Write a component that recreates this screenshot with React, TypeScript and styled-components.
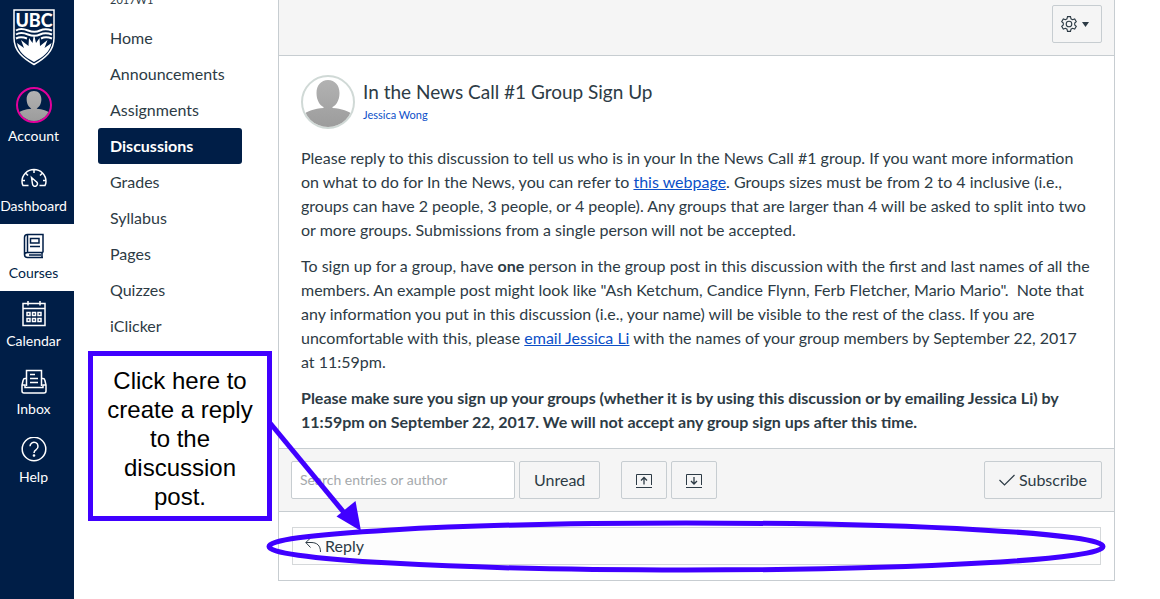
import React from "react";
import styled, { createGlobalStyle, css } from "styled-components";

const navy = "#001e47";
const ink = "#2d3b45";
const line = "#c7cdd1";
const marker = "#4000ff";

const GlobalStyle = createGlobalStyle`
  *, *::before, *::after { box-sizing: border-box; }
  body {
    margin: 0;
    background: #fff;
    color: ${ink};
    font: 16px/24px Lato, "Liberation Sans", sans-serif;
  }
  button, input { font: inherit; color: inherit; }
`;

const Page = styled.div`
  position: relative;
  display: flex;
  min-height: 100vh;
  overflow: hidden;
`;

const GlobalNav = styled.nav`
  flex: 0 0 74px;
  display: flex;
  flex-direction: column;
  background: ${navy};
`;

const Logo = styled.a`
  display: flex;
  justify-content: center;
  padding: 9px 7px 0 0;
  height: 84px;
`;

const GlobalItem = styled.a<{ $active?: boolean }>`
  display: flex;
  flex-direction: column;
  align-items: center;
  justify-content: flex-end;
  height: ${(p) => (p.$active ? 67 : 68)}px;
  padding: 0 7px 8px 0;
  font-size: 14px;
  line-height: 20px;
  text-decoration: none;
  white-space: nowrap;
  color: #fff;
  ${(p) => p.$active && css`
    background: #fff;
    color: ${navy};
  `}
  svg { display: block; margin-bottom: 4px; }
`;

const ProfileItem = styled(GlobalItem)`
  height: 72px;
  padding-bottom: 10px;
`;

const Avatar = styled.span<{ $size: number; $ring: string }>`
  flex: none;
  display: block;
  width: ${(p) => p.$size}px;
  height: ${(p) => p.$size}px;
  border: 2px solid ${(p) => p.$ring};
  border-radius: 50%;
  overflow: hidden;
  svg { display: block; width: 100%; height: 100%; margin: 0; }
`;

const AccountAvatar = styled(Avatar)`
  margin-bottom: 3px;
`;

const CourseNav = styled.nav`
  flex: 0 0 204px;
  padding: 0 36px 0 24px;
`;

const Term = styled.p`
  margin: -8px 0 12px;
  padding-left: 12px;
  font-size: 11px;
  line-height: 16px;
`;

const CourseLinks = styled.ul`
  margin: 0;
  padding: 0;
  list-style: none;
`;

const CourseLink = styled.a<{ $active?: boolean }>`
  display: block;
  padding: 6px 12px;
  border-radius: 3px;
  color: ${(p) => (p.$active ? "#fff" : ink)};
  background: ${(p) => (p.$active ? navy : "transparent")};
  font-weight: ${(p) => (p.$active ? 700 : 400)};
  text-decoration: none;
`;

const Main = styled.main`
  flex: 1;
  min-width: 0;
  padding-right: 45px;
`;

const Panel = styled.article`
  border: solid ${line};
  border-width: 0 1px 1px;
`;

const Bar = styled.div`
  display: flex;
  align-items: center;
  background: #f5f5f5;
  border-bottom: 1px solid ${line};
`;

const HeaderBar = styled(Bar)`
  justify-content: flex-end;
  padding: 5px 12px 12px;
`;

const FilterBar = styled(Bar)`
  gap: 4px;
  padding: 12px;
  border-top: 1px solid ${line};
`;

const Button = styled.button<{ $width?: number }>`
  display: flex;
  align-items: center;
  justify-content: center;
  gap: 4px;
  height: 38px;
  padding: 0 14px;
  ${(p) => p.$width && css`width: ${p.$width}px; padding: 0;`}
  border: 1px solid ${line};
  border-radius: 2px;
  background: #f5f5f5;
`;

const SettingsButton = styled(Button)`
  padding: 0 12px 0 8px;
  justify-content: space-between;
`;

const ToggleGroup = styled.div`
  display: flex;
  gap: 4px;
  margin: 0 auto 0 17px;
`;

const Search = styled.input`
  width: 224px;
  height: 38px;
  padding: 0 8px 2px;
  border: 1px solid ${line};
  border-radius: 2px;
  background: #fff;
  font-size: 14px;
  &::placeholder { color: #a5a9ac; opacity: 1; }
`;

const Post = styled.div`
  padding: 19px 20px 14px 22px;
  p { margin: 0 0 12px; }
  p:last-child { margin-bottom: 0; }
  p a { color: #0b4fc8; }
`;

const PostHeader = styled.header`
  display: flex;
  gap: 8px;
  margin-bottom: 17px;
`;

const Title = styled.h1`
  margin: 4px 0 0;
  font-size: 19px;
  font-weight: 400;
  line-height: 26px;
`;

const Author = styled.a`
  display: block;
  color: #0b4fc8;
  font-size: 11px;
  line-height: 20px;
  text-decoration: none;
`;

const ReplyArea = styled.div`
  padding: 15px 13px;
`;

const ReplySlot = styled.div`
  position: relative;
`;

const ReplyButton = styled.button`
  display: flex;
  align-items: center;
  gap: 4px;
  width: 100%;
  height: 38px;
  padding: 0 12px;
  border: 1px solid #d5d8da;
  background: #fdfdfd;
`;

const Ring = styled.svg`
  position: absolute;
  left: -25px;
  top: -7px;
  width: calc(100% + 29px);
  height: 53px;
  overflow: visible;
  pointer-events: none;
  ellipse {
    rx: calc(50% - 2px);
    ry: calc(50% - 3px);
  }
`;

const Callout = styled.aside`
  position: absolute;
  left: 88px;
  top: 351px;
  width: 184px;
  padding: 10px 10px 5px;
  border: 5px solid ${marker};
  background: #fff;
  color: #000;
  font: 24px/29px "Liberation Sans", sans-serif;
  text-align: center;
`;

const Pointer = styled.svg`
  position: absolute;
  left: 266px;
  top: 418px;
  pointer-events: none;
`;

const Person = () => (
  <svg viewBox="0 0 50 50" aria-hidden="true">
    <defs>
      <linearGradient id="person" x1="0" y1="0" x2="0" y2="1">
        <stop offset="0" stopColor="#b2b2b2" />
        <stop offset="1" stopColor="#9c9c9c" />
      </linearGradient>
    </defs>
    <path
      fill="url(#person)"
      d="M25 3c7 0 11.500 5.500 11.500 13S33 28.500 29.500 30v1c9 .5 16.500 3 20.500 7v12H0V38c4-4 11.500-6.500 20.500-7v-1C17 28.500 13.500 23.500 13.500 16S18 3 25 3z"
    />
  </svg>
);

const Shield = () => (
  <svg width="42" height="57" viewBox="0 0 42 57" fill="none" role="img" aria-label="UBC">
    <path d="M1 1h40v28c0 13-9 20-20 26.500C10 49 1 42 1 29z" stroke="#fff" strokeWidth="1.500" />
    <text x="21" y="17.500" textAnchor="middle" fontFamily="Lato, sans-serif" fontSize="18" fontWeight="900" fill="#fff">UBC</text>
    <path d="M3 21.500c4-2.500 7-2 12 0s8 2 12 0 7-2 12 0M3 25.500c4-2.500 7-2 12 0s8 2 12 0 7-2 12 0M3 29.500c4-2 7-1.500 11 0M28 29.500c4-2 7-1.500 11 0" stroke="#fff" strokeWidth="2" />
    <path d="M21 53C12 48 5.500 43 4 34l7 5-3-8 7.500 6 .5-8 3.500 5L21 25l2 9 3.500-5 .5 8 7.500-6-3 8 7-5c-1.500 9-8.500 14-17.500 19z" fill="#fff" />
  </svg>
);

const navIcon = {
  width: 26,
  height: 26,
  viewBox: "0 0 26 26",
  fill: "none",
  stroke: "currentColor",
  strokeWidth: 1.5,
  "aria-hidden": true,
} as const;

const DashboardIcon = () => (
  <svg {...navIcon}>
    <path d="M7.500 19.500H2Q1 17.500 1 15.500a12 12 0 0 1 24 0q0 2-1 4h-5.500M13 3.500v3.500M5 7.500l2 2M21 7.500l-2 2M1.500 14.500H4M22 14.500h2.500" />
    <path d="M10.500 11.500l4.800 4.200a2.500 2.500 0 1 1-3.800 2.300z" />
  </svg>
);

const CoursesIcon = () => (
  <svg {...navIcon}>
    <path d="M22 19.500V1.500H6.500Q3.500 1.500 3.500 4.500v17q0 3 3 3H22M22 19.500H6.500q-3 0-3 2.500M21 20v4.500M6.500 1.500v18" />
    <path d="M9.500 5.500h8.500v4.500H9.500zM9 13.500h10M8 22h12" />
  </svg>
);

const CalendarIcon = () => (
  <svg {...navIcon}>
    <path d="M2 2.500h22v22H2zM2 7.500h22M7 0v4.500M19 0v4.500" />
    <path d="M6 11.500h3v3H6zM11.500 11.500h3v3h-3zM17 11.500h3v3h-3zM6 17.500h3v3H6zM11.500 17.500h3v3h-3zM17 17.500h3v3h-3z" />
  </svg>
);

const InboxIcon = () => (
  <svg {...navIcon}>
    <path d="M5.500 17V1.500h15V17M9 5.500h5M9 9.500h8M9 13.500h8" />
    <path d="M5.500 9.500H4Q2.500 9.500 2.200 11L1 16v6q0 2 2 2h20q2 0 2-2v-6l-1.200-5q-.3-1.500-1.800-1.500h-1.500M1 16h3v2.500h18V16h3" />
  </svg>
);

const HelpIcon = () => (
  <svg {...navIcon}>
    <circle cx="13" cy="12" r="11.800" />
    <path d="M9 9.200a4 4 0 1 1 6.300 3.300c-1.500 1-2.300 1.500-2.300 3.500" />
    <circle cx="13" cy="18.500" r=".6" fill="currentColor" />
  </svg>
);

const GearIcon = () => (
  <svg width="16" height="16" viewBox="0 0 16 16" fill="none" stroke="currentColor" strokeWidth="1.100" aria-hidden="true">
    <path d="M6.500.6h3l.5 2.200 1.500.9 2.200-.7 1.600 2.600L13.700 7.100v1.800l1.600 1.500-1.600 2.600-2.200-.7-1.500.9-.5 2.200h-3L6 13.200l-1.500-.9-2.200.7L.7 10.400l1.600-1.500V7.100L.7 5.600 2.300 3l2.200.7L6 2.800z" />
    <circle cx="8" cy="8" r="2.800" />
  </svg>
);

const Caret = () => (
  <svg width="7" height="5" viewBox="0 0 7 5" aria-hidden="true">
    <path d="M0 0h7L3.500 5z" fill="currentColor" />
  </svg>
);

const TrayArrow = ({ down }: { down?: boolean }) => (
  <svg width="16" height="15" viewBox="0 0 16 15" fill="none" stroke="currentColor" aria-hidden="true">
    <path d="M.5 12V1.500h15V12M0 14.500h16" />
    <path d={down ? "M8 4v7M5 8l3 3 3-3" : "M8 11.500v-7M5 7.500l3-3 3 3"} strokeWidth="1.300" />
  </svg>
);

const CheckIcon = () => (
  <svg width="16" height="12" viewBox="0 0 16 12" fill="none" stroke="currentColor" strokeWidth="1.200" aria-hidden="true">
    <path d="M.5 6l5 5L15.500 1" />
  </svg>
);

const ReplyIcon = () => (
  <svg width="16" height="16" viewBox="0 0 16 16" fill="none" stroke="currentColor" aria-hidden="true">
    <path d="M5.500 0L.8 4.500l4.700 5M.8 4.500H6c6 0 9.500 3 9.500 9.500" />
  </svg>
);

const courseLinks = [
  "Home", "Announcements", "Assignments", "Discussions", "Grades",
  "Syllabus", "Pages", "Quizzes", "iClicker",
];

export default function App() {
  return (
    <Page>
      <GlobalStyle />
      <GlobalNav aria-label="Global">
        <Logo href="#"><Shield /></Logo>
        <ProfileItem href="#">
          <AccountAvatar $size={36} $ring="#e2009b"><Person /></AccountAvatar>
          Account
        </ProfileItem>
        <GlobalItem href="#"><DashboardIcon />Dashboard</GlobalItem>
        <GlobalItem href="#" $active><CoursesIcon />Courses</GlobalItem>
        <GlobalItem href="#"><CalendarIcon />Calendar</GlobalItem>
        <GlobalItem href="#"><InboxIcon />Inbox</GlobalItem>
        <GlobalItem href="#"><HelpIcon />Help</GlobalItem>
      </GlobalNav>

      <CourseNav aria-label="Course">
        <Term>2017W1</Term>
        <CourseLinks>
          {courseLinks.map((name) => (
            <li key={name}>
              <CourseLink href="#" $active={name === "Discussions"}>{name}</CourseLink>
            </li>
          ))}
        </CourseLinks>
      </CourseNav>

      <Main>
        <Panel>
          <HeaderBar>
            <SettingsButton $width={50} aria-label="Settings"><GearIcon /><Caret /></SettingsButton>
          </HeaderBar>
          <Post>
            <PostHeader>
              <Avatar $size={54} $ring="#d0d9d6"><Person /></Avatar>
              <div>
                <Title>In the News Call #1 Group Sign Up</Title>
                <Author href="#">Jessica Wong</Author>
              </div>
            </PostHeader>
            <p>
              Please reply to this discussion to tell us who is in your In the News Call #1 group. If you want more
              information on what to do for In the News, you can refer to <a href="#">this webpage</a>. Groups sizes
              must be from 2 to 4 inclusive (i.e., groups can have 2 people, 3 people, or 4 people). Any groups that
              are larger than 4 will be asked to split into two or more groups. Submissions from a single person will
              not be accepted.
            </p>
            <p>
              To sign up for a group, have <strong>one</strong> person in the group post in this discussion with the
              first and last names of all the members. An example post might look like "Ash Ketchum, Candice Flynn,
              Ferb Fletcher, Mario Mario".&nbsp; Note that any information you put in this discussion (i.e., your
              name) will be visible to the rest of the class. If you are uncomfortable with this, please{" "}
              <a href="#">email Jessica Li</a> with the names of your group members by September 22, 2017 at 11:59pm.
            </p>
            <p>
              <strong>
                Please make sure you sign up your groups (whether it is by using this discussion or by emailing
                Jessica Li) by 11:59pm on September 22, 2017. We will not accept any group sign ups after this time.
              </strong>
            </p>
          </Post>
          <FilterBar>
            <Search type="search" placeholder="Search entries or author" aria-label="Search entries or author" />
            <Button>Unread</Button>
            <ToggleGroup>
              <Button $width={46} aria-label="Collapse replies"><TrayArrow /></Button>
              <Button $width={46} aria-label="Expand replies"><TrayArrow down /></Button>
            </ToggleGroup>
            <Button><CheckIcon />Subscribe</Button>
          </FilterBar>
          <ReplyArea>
            <ReplySlot>
              <ReplyButton><ReplyIcon />Reply</ReplyButton>
              <Ring aria-hidden="true">
                <ellipse cx="50%" cy="50%" fill="none" stroke={marker} strokeWidth="5" />
              </Ring>
            </ReplySlot>
          </ReplyArea>
        </Panel>
      </Main>

      <Callout>Click here to create a reply to the discussion post.</Callout>
      <Pointer width="100" height="116" viewBox="0 0 100 116" aria-hidden="true">
        <path d="M4 5L80 97" stroke={marker} strokeWidth="5" />
        <path d="M95 113L70.500 98.500 89.500 83z" fill={marker} />
      </Pointer>
    </Page>
  );
}
